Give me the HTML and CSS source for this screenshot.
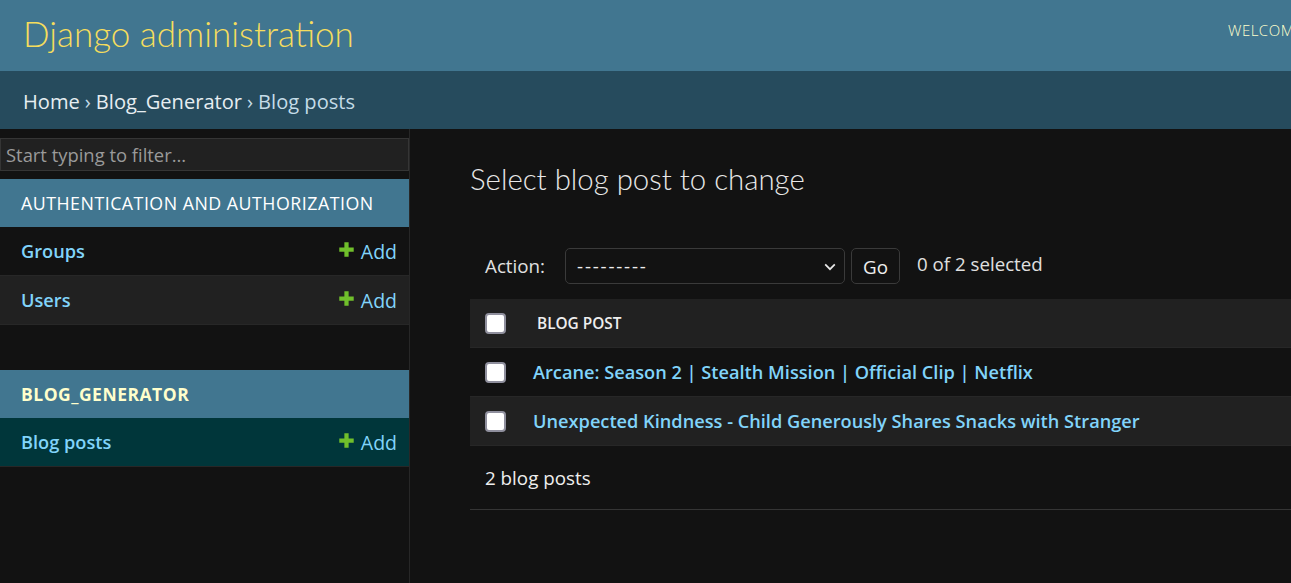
FILE: index.html
```html
<!DOCTYPE html>
<html lang="en">
<head>
<meta charset="utf-8">
<title>Select blog post to change | Django site admin</title>
<link rel="stylesheet" href="styles.css">
</head>
<body>
<div class="page">
  <header class="header">
    <div class="branding"><h1 class="site-name">Django administration</h1></div>
    <div class="user-tools">Welcome, <strong>admin</strong>. View site / Change password / Log out</div>
  </header>
  <nav class="breadcrumbs">
    <a href="#">Home</a><span class="sep">›</span><a href="#">Blog_Generator</a><span class="sep">›</span><span class="current">Blog posts</span>
  </nav>
  <div class="main">
    <aside class="sidebar">
      <input class="nav-filter" type="search" placeholder="Start typing to filter...">
      <section class="module">
        <div class="caption">Authentication and Authorization</div>
        <div class="model-row">
          <a class="model-name" href="#">Groups</a>
          <a class="addlink" href="#"><svg class="plus" viewBox="0 0 16 16" width="17" height="17"><path d="M6 1.2h4v4.8h4.8v4h-4.8v4.8h-4v-4.8h-4.8v-4h4.8z" fill="#70bf2b"/></svg>Add</a>
        </div>
        <div class="model-row alt">
          <a class="model-name" href="#">Users</a>
          <a class="addlink" href="#"><svg class="plus" viewBox="0 0 16 16" width="17" height="17"><path d="M6 1.2h4v4.8h4.8v4h-4.8v4.8h-4v-4.8h-4.8v-4h4.8z" fill="#70bf2b"/></svg>Add</a>
        </div>
      </section>
      <section class="module current-app">
        <div class="caption">Blog_Generator</div>
        <div class="model-row current-model">
          <a class="model-name" href="#">Blog posts</a>
          <a class="addlink" href="#"><svg class="plus" viewBox="0 0 16 16" width="17" height="17"><path d="M6 1.2h4v4.8h4.8v4h-4.8v4.8h-4v-4.8h-4.8v-4h4.8z" fill="#70bf2b"/></svg>Add</a>
        </div>
      </section>
    </aside>
    <div class="content">
      <h1 class="title">Select blog post to change</h1>
      <div class="actions">
        <label class="action-label">Action:</label>
        <div class="select-wrap">
          <select class="action-select"><option>---------</option></select>
          <svg class="chevron" viewBox="0 0 12 8" width="12" height="8"><path d="M1.2 1.4l4.8 4.8 4.8-4.8" fill="none" stroke="#e8e8e8" stroke-width="1.7"/></svg>
        </div>
        <button class="go-btn" type="button">Go</button>
        <span class="counter">0 of 2 selected</span>
      </div>
      <table class="result-list">
        <thead>
          <tr><th class="cb-col"><input type="checkbox" class="cb"></th><th class="col-head">Blog post</th></tr>
        </thead>
        <tbody>
          <tr class="row1"><td class="cb-col"><input type="checkbox" class="cb"></td><th class="entry"><a href="#">Arcane: Season 2 | Stealth Mission | Official Clip | Netflix</a></th></tr>
          <tr class="row2"><td class="cb-col"><input type="checkbox" class="cb"></td><th class="entry"><a href="#">Unexpected Kindness - Child Generously Shares Snacks with Stranger</a></th></tr>
        </tbody>
      </table>
      <p class="paginator">2 blog posts</p>
    </div>
  </div>
</div>
</body>
</html>
```

FILE: styles.css
```css
html, body {
  margin: 0;
  padding: 0;
  overflow: hidden;
  background: #121212;
}
body {
  font-family: "Open Sans", "Noto Sans", sans-serif;
  color: #eeeeee;
  font-size: 18.8px;
}
a { text-decoration: none; }
.page {
  width: 1800px;
  min-height: 583px;
  display: flex;
  flex-direction: column;
}
.header {
  height: 71px;
  background: #417690;
  display: flex;
  align-items: center;
  padding: 0 23px;
  box-sizing: border-box;
}
.branding { flex: 0 0 1205px; padding-bottom: 6px; }
.site-name {
  margin: 0;
  font-family: "Lato", "Open Sans", sans-serif;
  font-weight: 300;
  font-size: 35px;
  line-height: 40px;
  color: #f5dd5d;
}
.user-tools {
  align-self: flex-start;
  margin-top: 20px;
  font-size: 15px;
  font-weight: 300;
  letter-spacing: 0.5px;
  text-transform: uppercase;
  color: #ffffcc;
  white-space: nowrap;
}
.user-tools strong { font-weight: 600; }
.breadcrumbs {
  height: 58px;
  background: #264b5d;
  display: flex;
  align-items: center;
  padding: 2px 23px 0;
  box-sizing: border-box;
  font-size: 20.1px;
  color: #c4dce8;
}
.breadcrumbs a { color: #e6eef2; }
.breadcrumbs .sep { margin: 0 5px; color: #c4dce8; }
.breadcrumbs .current { color: #c4dce8; }
.main {
  flex: 1;
  display: flex;
}
.sidebar {
  flex: 0 0 409px;
  border-right: 1px solid #272727;
  padding-top: 9px;
  min-height: 454px;
}
.nav-filter {
  display: block;
  width: 100%;
  box-sizing: border-box;
  height: 33px;
  margin: 0 0 8px;
  padding: 0 5px;
  background: #212121;
  border: 1px solid #353535;
  color: #eeeeee;
  font-family: inherit;
  font-size: 18.4px;
  outline: none;
}
.nav-filter::placeholder { color: #9a9a9a; }
.module { margin-bottom: 45px; }
.caption {
  height: 48px;
  background: #417690;
  color: #ffffff;
  display: flex;
  align-items: center;
  padding: 0 21px;
  font-size: 17.8px;
  letter-spacing: 0.5px;
  text-transform: uppercase;
}
.current-app .caption { color: #ffffcc; font-weight: 700; font-size: 17.5px; }
.model-row {
  height: 48px;
  box-sizing: content-box;
  border-bottom: 1px solid #272727;
  display: flex;
  align-items: center;
  justify-content: space-between;
  padding: 0 12px 0 21px;
}
.model-row.alt { background: #212121; }
.model-row.current-model { background: #00363a; }
.model-name {
  color: #81d4fa;
  font-weight: 600;
  font-size: 18.2px;
}
.addlink {
  color: #81d4fa;
  font-size: 19.5px;
  display: flex;
  align-items: center;
}
.plus { margin-right: 6px; margin-top: -4px; }
.content {
  flex: 1;
  padding: 35px 0 0 60px;
}
.title {
  margin: 0 0 54px;
  font-family: "Lato", "Open Sans", sans-serif;
  font-weight: 300;
  font-size: 29.4px;
  line-height: 30px;
  color: #e8e8e8;
}
.actions {
  display: flex;
  align-items: center;
  height: 36px;
  padding-left: 15px;
  color: #e0e0e0;
}
.action-label { font-size: 18.8px; margin-right: 20px; }
.select-wrap { position: relative; }
.action-select {
  appearance: none;
  -webkit-appearance: none;
  width: 280px;
  height: 36px;
  background: #121212;
  color: #eeeeee;
  border: 1px solid #3a3a3a;
  border-radius: 5px;
  padding: 0 11px;
  font-family: inherit;
  font-size: 18.8px;
  letter-spacing: 1.8px;
}
.chevron { position: absolute; right: 9px; top: 15px; }
.go-btn {
  margin-left: 6px;
  width: 49px;
  height: 36px;
  background: #121212;
  color: #eeeeee;
  border: 1px solid #3a3a3a;
  border-radius: 5px;
  font-family: inherit;
  font-size: 18.8px;
  padding: 2px 0 0;
}
.counter { margin-left: 17px; font-size: 18.7px; margin-top: -5px; }
.result-list {
  margin-top: 15px;
  width: 100%;
  border-collapse: collapse;
}
.result-list thead th {
  height: 48px;
  background: #212121;
  border-bottom: 1px solid #272727;
  padding: 0;
  text-align: left;
}
.cb-col { width: 48px; padding: 0 0 0 15px !important; vertical-align: middle; }
.col-head {
  font-size: 15.4px;
  font-weight: 600;
  text-transform: uppercase;
  color: #eeeeee;
  padding-left: 4px !important;
}
.result-list tbody td, .result-list tbody th {
  height: 48px;
  border-bottom: 1px solid #272727;
  padding: 0;
  text-align: left;
}
.row2 td, .row2 th { background: #212121; }
.entry a { color: #81d4fa; font-weight: 600; font-size: 18.2px; }
.cb {
  appearance: none;
  -webkit-appearance: none;
  display: block;
  margin: 0;
  width: 21px;
  height: 21px;
  box-sizing: border-box;
  background: #ffffff;
  border: 2.5px solid #8f8f9d;
  border-radius: 4px;
}
.paginator {
  margin: 0;
  height: 63px;
  border-bottom: 1px solid #353535;
  display: flex;
  align-items: center;
  padding-left: 15px;
  font-size: 18.8px;
  color: #eeeeee;
}
```
